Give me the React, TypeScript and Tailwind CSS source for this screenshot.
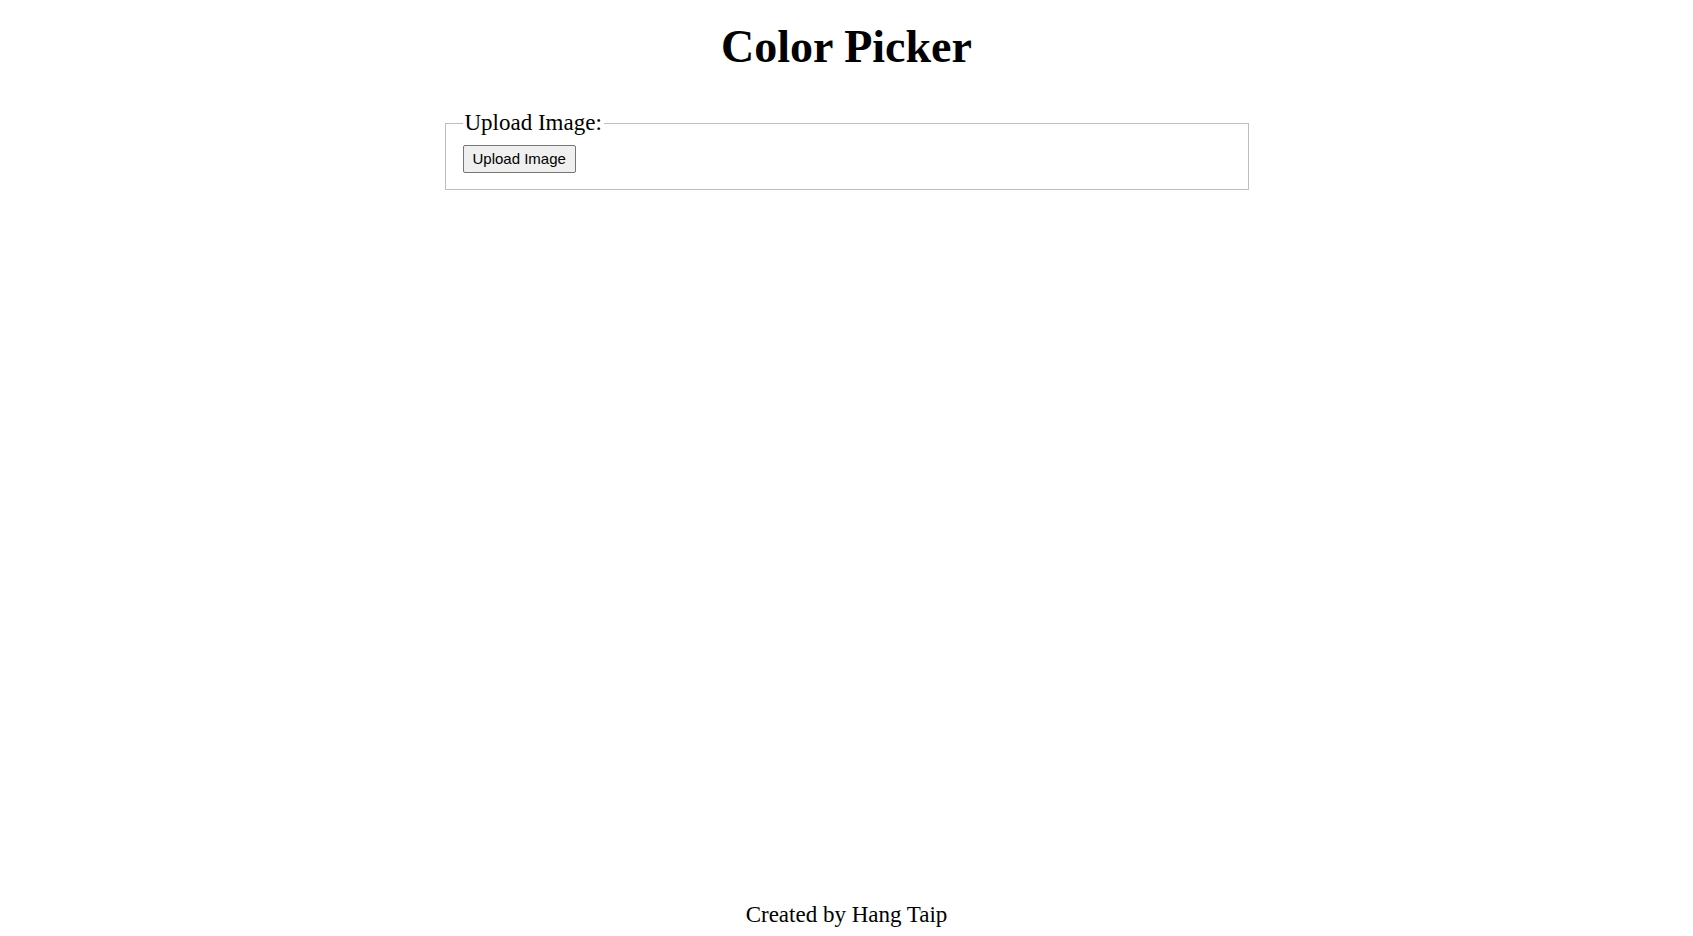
export default function App() {
  return (
    <div className="min-h-screen flex flex-col bg-white text-black font-['Liberation_Serif',serif]">
      <h1 className="text-[46px] font-bold text-center leading-[52px] mt-[21px]">Color Picker</h1>

      <fieldset className="w-[804px] mx-auto mt-[37px] border border-[#bdbdbd] px-[17px] pt-[9px] pb-[16px]">
        <legend className="px-[2px] text-[23px] leading-[26px]">Upload Image:</legend>
        <button className="h-[28px] px-[9px] text-[15px] font-['Liberation_Sans',Arial,sans-serif] bg-[#efefef] border border-[#767676] rounded-[2px] text-black">
          Upload Image
        </button>
      </fieldset>

      <footer className="mt-auto text-center text-[23px] leading-[26px] pb-[8px]">Created by Hang Taip</footer>
    </div>
  )
}
